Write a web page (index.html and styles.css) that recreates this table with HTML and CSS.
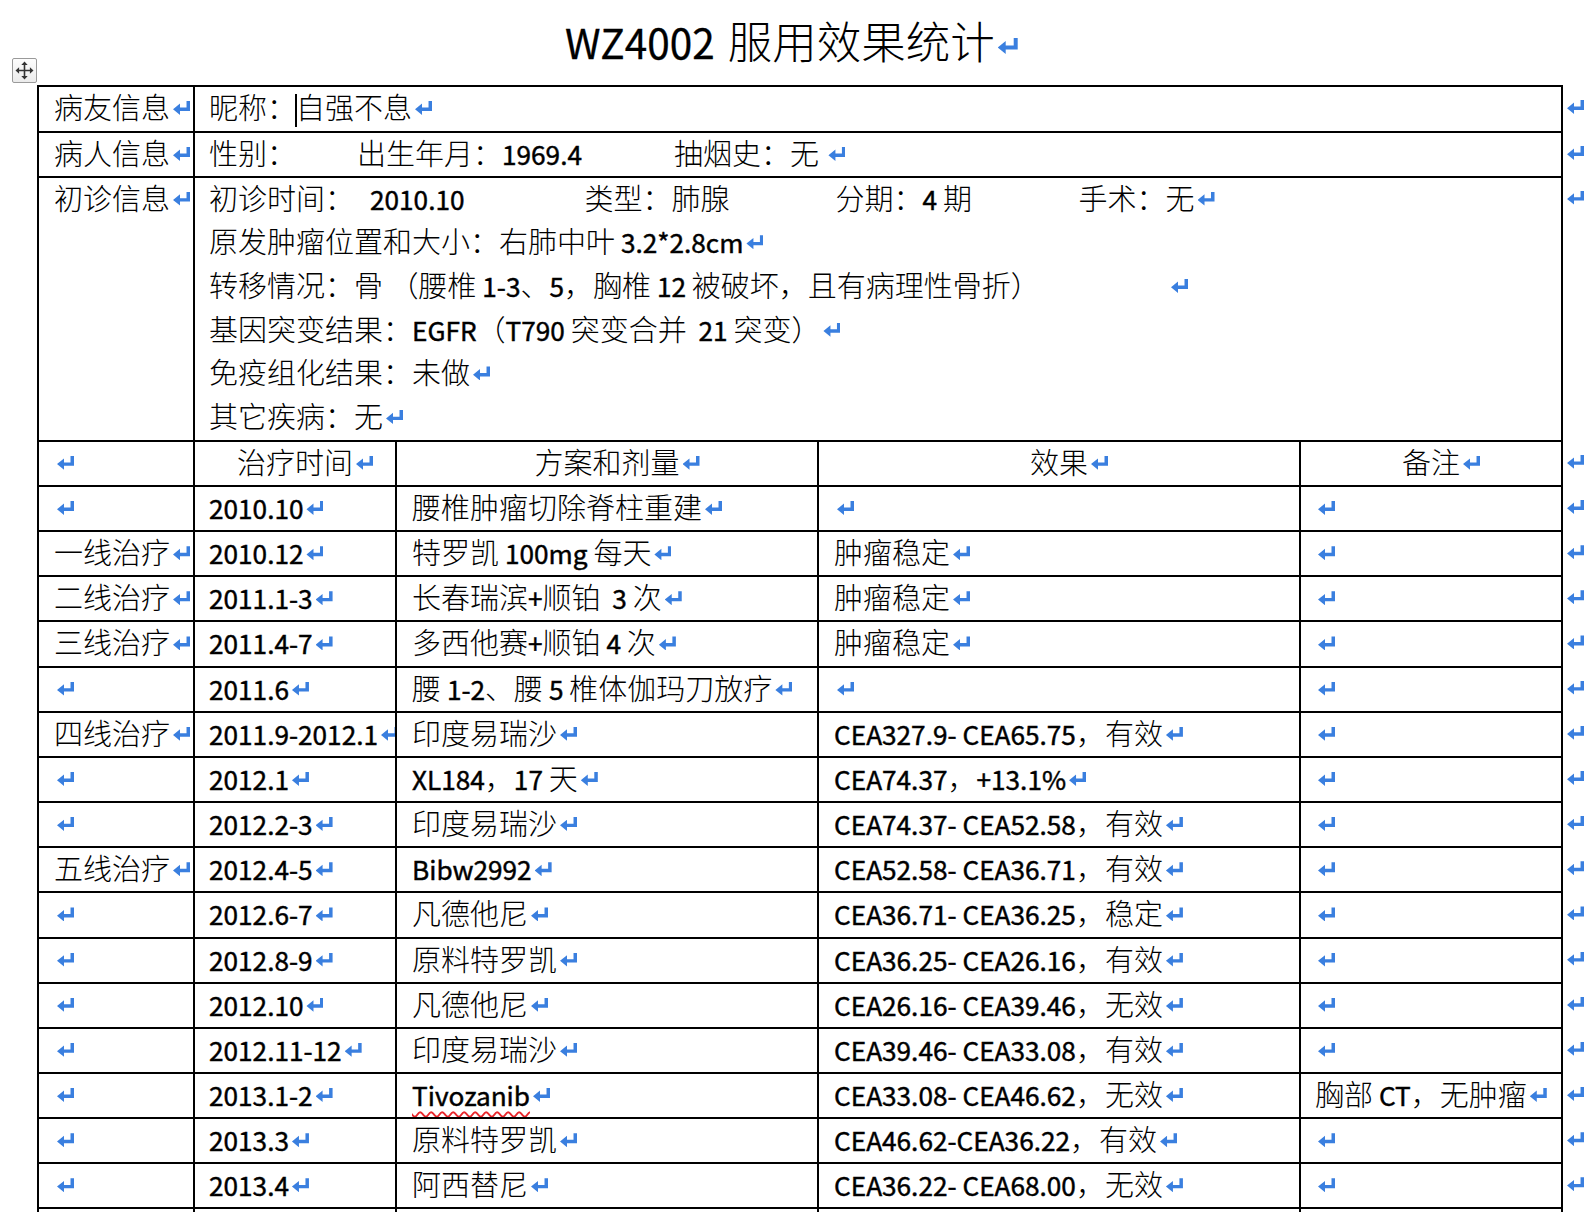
FILE: index.html
```html
<!DOCTYPE html>
<html lang="zh-CN">
<head>
<meta charset="utf-8">
<title>WZ4002 服用效果统计</title>
<link rel="stylesheet" href="styles.css">
</head>
<body>
<div class="page">
  <div class="handle">
    <svg viewBox="0 0 23 23" width="23" height="23"><path d="M11.5 5v13M5 11.5h13" stroke="#333" stroke-width="1.6"/><path d="M11.5 2.5l-3.2 3.6h6.4zM11.5 20.5l-3.2-3.6h6.4zM2.5 11.5l3.6-3.2v6.4zM20.5 11.5l-3.6-3.2v6.4z" fill="#333"/></svg>
  </div>
  <h1 class="title"><span class="lt">WZ4002 </span>服用效果统计<i class="rm rm-lg"></i></h1>
  <table class="doc">
    <colgroup><col class="c1"><col class="c2"><col class="c3"><col class="c4"><col class="c5"><col class="c6"></colgroup>
    <tbody>
      <tr class="top"><td>病友信息<i class="rm"></i></td><td colspan="4">昵称：<i class="caret"></i>自强不息<i class="rm"></i></td><td class="eor"><i class="rm"></i></td></tr>
      <tr class="top"><td>病人信息<i class="rm"></i></td><td colspan="4"><span class="f-sex">性别：</span><span class="f-birth">出生年月：<span class="lt">1969.4</span></span>抽烟史：无 <i class="rm"></i></td><td class="eor"><i class="rm"></i></td></tr>
      <tr class="diag">
        <td>初诊信息<i class="rm"></i></td>
        <td colspan="4" class="lines">
          <div><span class="f-date">初诊时间：</span><span class="f-dateval"><span class="lt">2010.10</span></span><span class="f-type">类型：肺腺</span><span class="f-stage">分期：<span class="lt">4 </span>期</span>手术：无<i class="rm"></i></div>
          <div>原发肿瘤位置和大小：右肺中叶<span class="lt"> 3.2*2.8cm</span><i class="rm"></i></div>
          <div><span class="f-meta">转移情况：骨 （腰椎<span class="lt"> 1-3</span>、<span class="lt">5</span>，胸椎<span class="lt"> 12 </span>被破坏，且有病理性骨折）</span><i class="rm"></i></div>
          <div>基因突变结果：<span class="lt">EGFR</span>（<span class="lt">T790 </span>突变合并<span class="lt">&nbsp; 21 </span>突变）<i class="rm"></i></div>
          <div>免疫组化结果：未做<i class="rm"></i></div>
          <div>其它疾病：无<i class="rm"></i></div>
        </td>
        <td class="eor"><i class="rm"></i></td>
      </tr>
      <tr><td><i class="rm"></i></td><td class="ctr">治疗时间<i class="rm"></i></td><td class="ctr">方案和剂量<i class="rm"></i></td><td class="ctr">效果<i class="rm"></i></td><td class="ctr">备注<i class="rm"></i></td><td class="eor"><i class="rm"></i></td></tr>
      <tr><td><i class="rm"></i></td><td><span class="lt">2010.10</span><i class="rm"></i></td><td>腰椎肿瘤切除脊柱重建<i class="rm"></i></td><td><i class="rm"></i></td><td><i class="rm"></i></td><td class="eor"><i class="rm"></i></td></tr>
      <tr><td>一线治疗<i class="rm"></i></td><td><span class="lt">2010.12</span><i class="rm"></i></td><td>特罗凯<span class="lt"> 100mg </span>每天<i class="rm"></i></td><td>肿瘤稳定<i class="rm"></i></td><td><i class="rm"></i></td><td class="eor"><i class="rm"></i></td></tr>
      <tr><td>二线治疗<i class="rm"></i></td><td><span class="lt">2011.1-3</span><i class="rm"></i></td><td>长春瑞滨<span class="lt">+</span>顺铂<span class="lt">&nbsp; 3 </span>次<i class="rm"></i></td><td>肿瘤稳定<i class="rm"></i></td><td><i class="rm"></i></td><td class="eor"><i class="rm"></i></td></tr>
      <tr><td>三线治疗<i class="rm"></i></td><td><span class="lt">2011.4-7</span><i class="rm"></i></td><td>多西他赛<span class="lt">+</span>顺铂<span class="lt"> 4 </span>次<i class="rm"></i></td><td>肿瘤稳定<i class="rm"></i></td><td><i class="rm"></i></td><td class="eor"><i class="rm"></i></td></tr>
      <tr><td><i class="rm"></i></td><td><span class="lt">2011.6</span><i class="rm"></i></td><td>腰<span class="lt"> 1-2</span>、腰<span class="lt"> 5 </span>椎体伽玛刀放疗<i class="rm"></i></td><td><i class="rm"></i></td><td><i class="rm"></i></td><td class="eor"><i class="rm"></i></td></tr>
      <tr><td>四线治疗<i class="rm"></i></td><td><span class="lt">2011.9-2012.1</span><i class="rm"></i></td><td>印度易瑞沙<i class="rm"></i></td><td><span class="lt">CEA327.9- CEA65.75</span>，有效<i class="rm"></i></td><td><i class="rm"></i></td><td class="eor"><i class="rm"></i></td></tr>
      <tr><td><i class="rm"></i></td><td><span class="lt">2012.1</span><i class="rm"></i></td><td><span class="lt">XL184</span>，<span class="lt">17 </span>天<i class="rm"></i></td><td><span class="lt">CEA74.37</span>，<span class="lt">+13.1%</span><i class="rm"></i></td><td><i class="rm"></i></td><td class="eor"><i class="rm"></i></td></tr>
      <tr><td><i class="rm"></i></td><td><span class="lt">2012.2-3</span><i class="rm"></i></td><td>印度易瑞沙<i class="rm"></i></td><td><span class="lt">CEA74.37- CEA52.58</span>，有效<i class="rm"></i></td><td><i class="rm"></i></td><td class="eor"><i class="rm"></i></td></tr>
      <tr><td>五线治疗<i class="rm"></i></td><td><span class="lt">2012.4-5</span><i class="rm"></i></td><td><span class="lt">Bibw2992</span><i class="rm"></i></td><td><span class="lt">CEA52.58- CEA36.71</span>，有效<i class="rm"></i></td><td><i class="rm"></i></td><td class="eor"><i class="rm"></i></td></tr>
      <tr><td><i class="rm"></i></td><td><span class="lt">2012.6-7</span><i class="rm"></i></td><td>凡德他尼<i class="rm"></i></td><td><span class="lt">CEA36.71- CEA36.25</span>，稳定<i class="rm"></i></td><td><i class="rm"></i></td><td class="eor"><i class="rm"></i></td></tr>
      <tr><td><i class="rm"></i></td><td><span class="lt">2012.8-9</span><i class="rm"></i></td><td>原料特罗凯<i class="rm"></i></td><td><span class="lt">CEA36.25- CEA26.16</span>，有效<i class="rm"></i></td><td><i class="rm"></i></td><td class="eor"><i class="rm"></i></td></tr>
      <tr><td><i class="rm"></i></td><td><span class="lt">2012.10</span><i class="rm"></i></td><td>凡德他尼<i class="rm"></i></td><td><span class="lt">CEA26.16- CEA39.46</span>，无效<i class="rm"></i></td><td><i class="rm"></i></td><td class="eor"><i class="rm"></i></td></tr>
      <tr><td><i class="rm"></i></td><td><span class="lt">2012.11-12</span><i class="rm"></i></td><td>印度易瑞沙<i class="rm"></i></td><td><span class="lt">CEA39.46- CEA33.08</span>，有效<i class="rm"></i></td><td><i class="rm"></i></td><td class="eor"><i class="rm"></i></td></tr>
      <tr><td><i class="rm"></i></td><td><span class="lt">2013.1-2</span><i class="rm"></i></td><td><span class="lt spell">Tivozanib</span><i class="rm"></i></td><td><span class="lt">CEA33.08- CEA46.62</span>，无效<i class="rm"></i></td><td>胸部<span class="lt"> CT</span>，无肿瘤<i class="rm"></i></td><td class="eor"><i class="rm"></i></td></tr>
      <tr><td><i class="rm"></i></td><td><span class="lt">2013.3</span><i class="rm"></i></td><td>原料特罗凯<i class="rm"></i></td><td><span class="lt">CEA46.62-CEA36.22</span>，有效<i class="rm"></i></td><td><i class="rm"></i></td><td class="eor"><i class="rm"></i></td></tr>
      <tr><td><i class="rm"></i></td><td><span class="lt">2013.4</span><i class="rm"></i></td><td>阿西替尼<i class="rm"></i></td><td><span class="lt">CEA36.22- CEA68.00</span>，无效<i class="rm"></i></td><td><i class="rm"></i></td><td class="eor"><i class="rm"></i></td></tr>
      <tr><td><i class="rm"></i></td><td><i class="rm"></i></td><td><i class="rm"></i></td><td><i class="rm"></i></td><td><i class="rm"></i></td><td class="eor"><i class="rm"></i></td></tr>
    </tbody>
  </table>
</div>
</body>
</html>
```

FILE: styles.css
```css
html, body {
  margin: 0;
  padding: 0;
  background: #ffffff;
  overflow: hidden;
}

body {
  font-family: "Noto Sans CJK SC", "Noto Sans", sans-serif;
  font-size: 29px;
  font-weight: 300;
  color: #000000;
}

.page {
  position: relative;
  width: 1594px;
  height: 1212px;
}

.handle {
  position: absolute;
  left: 12px;
  top: 58px;
  width: 23px;
  height: 23px;
  border: 1px solid #9a9a9a;
  border-radius: 2px;
  background: linear-gradient(#fdfdfd, #ebebeb);
}

.handle svg {
  display: block;
}

/* Latin (Calibri-like) runs */
.lt {
  font-size: 26.2px;
  font-weight: 400;
  -webkit-text-stroke: 0.45px #000000;
  line-height: 20px;
}

.title {
  margin: 0;
  height: 85px;
  line-height: 80px;
  padding-left: 565px;
  font-size: 44.5px;
  font-weight: 300;
  white-space: nowrap;
}

.title .lt {
  font-size: 40.5px;
  -webkit-text-stroke: 0.3px #000000;
  line-height: 40px;
  padding-right: 4px;
}

.doc {
  border-collapse: collapse;
  table-layout: fixed;
  width: 1557px;
  margin-left: 37px;
}

.c1 { width: 156px; }
.c2 { width: 202px; }
.c3 { width: 422px; }
.c4 { width: 482px; }
.c5 { width: 262px; }
.c6 { width: 33px; }

.doc td {
  border: 2px solid #000000;
  padding: 0 0 4px 15px;
  line-height: 39.15px;
  vertical-align: top;
  white-space: nowrap;
  overflow: hidden;
}

.doc tr.top td {
  line-height: 38.6px;
}

.doc tr.diag td {
  line-height: 39.7px;
}

.doc tr.diag td.lines {
  padding-bottom: 0;
}

.lines div {
  padding-bottom: 4px;
}

.doc td[colspan] {
  padding-left: 14px;
}

.doc td:nth-child(2) {
  padding-left: 14px;
}

.doc td:nth-child(5) {
  padding-left: 14px;
}

.doc td.eor {
  border: none;
  padding-left: 4px;
  overflow: visible;
}

.doc td.ctr {
  text-align: center;
  padding-left: 0;
}

.ctr .rm {
  margin-right: -20px;
}

/* return (paragraph) marks */
.rm {
  display: inline-block;
  width: 17px;
  height: 14px;
  margin-left: 3px;
  vertical-align: 4px;
  background: #3a7fdf;
  clip-path: polygon(0 8.3px, 7px 2.6px, 7px 6.6px, 13.5px 6.6px, 13.5px 0, 17px 0, 17px 10px, 7px 10px, 7px 14px);
}

.eor .rm {
  margin-left: 0;
}

.rm-lg {
  width: 20px;
  height: 16px;
  margin-left: 3px;
  vertical-align: 5px;
  clip-path: polygon(0 9.5px, 8px 3px, 8px 7.6px, 16px 7.6px, 16px 0, 20px 0, 20px 11.4px, 8px 11.4px, 8px 16px);
}

.caret {
  display: inline-block;
  width: 2px;
  height: 33px;
  margin: 0 -1px;
  background: #000000;
  vertical-align: -8px;
}

/* tab-stop like fields */
.f-sex, .f-birth, .f-date, .f-dateval, .f-type, .f-stage, .f-meta {
  display: inline-block;
}
.f-sex { width: 148px; }
.f-birth { width: 317px; }
.f-date { width: 161px; }
.f-dateval { width: 214.5px; }
.f-type { width: 251px; }
.f-stage { width: 243px; }
.f-meta { width: 959px; }

.spell {
  text-decoration: underline wavy #e8262b;
  text-decoration-thickness: 1.5px;
  text-underline-offset: 5px;
  text-decoration-skip-ink: none;
}
```
